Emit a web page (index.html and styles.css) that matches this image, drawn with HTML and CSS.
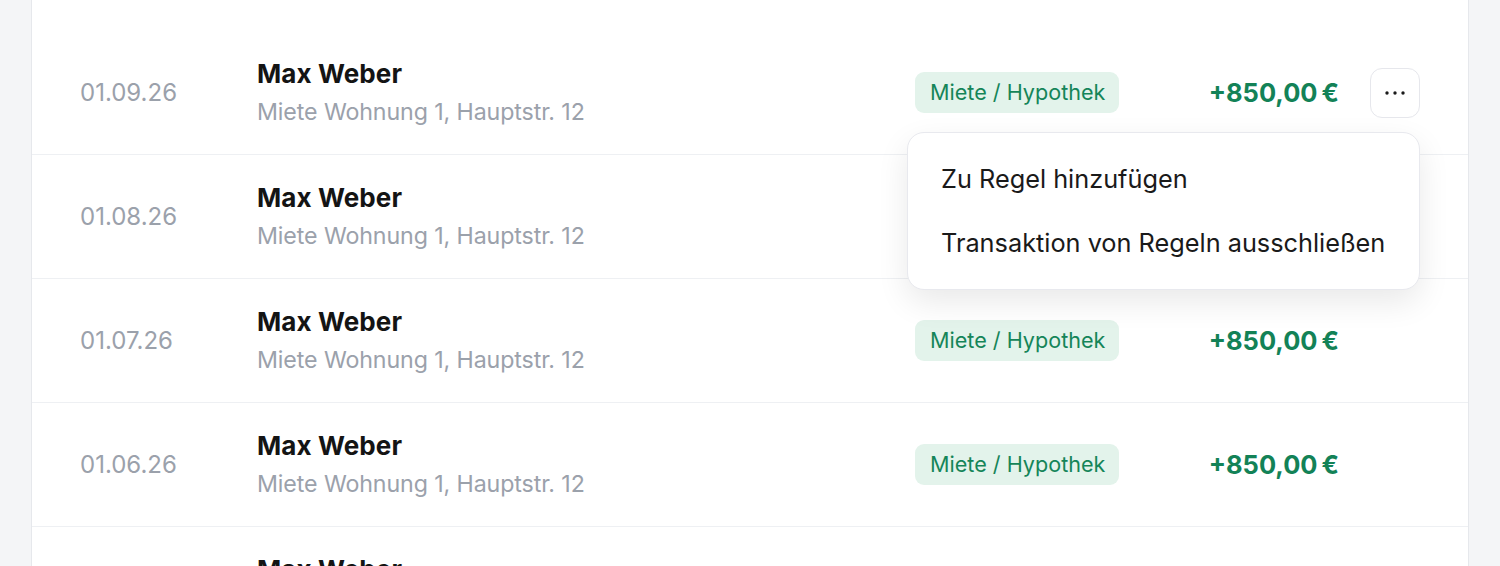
FILE: index.html
```html
<!DOCTYPE html>
<html lang="de">
<head>
<meta charset="utf-8">
<title>Transaktionen</title>
<link rel="stylesheet" href="styles.css">
</head>
<body>
<div class="page">
  <div class="card">
    <div class="row">
      <div class="date">01.09.26</div>
      <div class="main">
        <div class="name">Max Weber</div>
        <div class="sub">Miete Wohnung 1, Hauptstr. 12</div>
      </div>
      <div class="cat"><span class="badge">Miete / Hypothek</span></div>
      <div class="amount">+850,00&#8201;€</div>
      <div class="action">
        <button class="kebab" aria-label="Mehr">
          <svg width="24" height="6" viewBox="0 0 24 6"><circle cx="4" cy="3" r="1.7"/><circle cx="12" cy="3" r="1.7"/><circle cx="20" cy="3" r="1.7"/></svg>
        </button>
        <div class="menu">
          <div class="menu-item">Zu Regel hinzufügen</div>
          <div class="menu-item">Transaktion von Regeln ausschließen</div>
        </div>
      </div>
    </div>
    <div class="row">
      <div class="date">01.08.26</div>
      <div class="main">
        <div class="name">Max Weber</div>
        <div class="sub">Miete Wohnung 1, Hauptstr. 12</div>
      </div>
      <div class="cat"><span class="badge">Miete / Hypothek</span></div>
      <div class="amount">+850,00&#8201;€</div>
      <div class="action"></div>
    </div>
    <div class="row">
      <div class="date">01.07.26</div>
      <div class="main">
        <div class="name">Max Weber</div>
        <div class="sub">Miete Wohnung 1, Hauptstr. 12</div>
      </div>
      <div class="cat"><span class="badge">Miete / Hypothek</span></div>
      <div class="amount">+850,00&#8201;€</div>
      <div class="action"></div>
    </div>
    <div class="row">
      <div class="date">01.06.26</div>
      <div class="main">
        <div class="name">Max Weber</div>
        <div class="sub">Miete Wohnung 1, Hauptstr. 12</div>
      </div>
      <div class="cat"><span class="badge">Miete / Hypothek</span></div>
      <div class="amount">+850,00&#8201;€</div>
      <div class="action"></div>
    </div>
    <div class="row">
      <div class="date">01.05.26</div>
      <div class="main">
        <div class="name">Max Weber</div>
        <div class="sub">Miete Wohnung 1, Hauptstr. 12</div>
      </div>
      <div class="cat"><span class="badge">Miete / Hypothek</span></div>
      <div class="amount">+850,00&#8201;€</div>
      <div class="action"></div>
    </div>
  </div>
</div>
</body>
</html>
```
FILE: styles.css
```css
* { box-sizing: border-box; }
html, body {
  margin: 0;
  padding: 0;
  background: #f4f5f7;
  font-family: Inter, "Noto Sans", sans-serif;
  overflow: hidden;
}
.page {
  padding: 0 31px 0 31px;
  height: 566px;
}
.card {
  background: #fff;
  border-left: 1px solid #e6e8ec;
  border-right: 1px solid #e6e8ec;
  padding-top: 31px;
}
.row {
  display: flex;
  align-items: center;
  height: 124px;
  padding: 0 48px;
  border-bottom: 1px solid #eef0f3;
}
.date {
  width: 177px;
  flex: none;
  font-size: 24px;
  color: #9ba1ab;
}
.main {
  flex: 1;
  display: flex;
  flex-direction: column;
  gap: 4px;
}
.name {
  font-size: 26px;
  line-height: 34px;
  font-weight: 700;
  color: #141414;
  letter-spacing: 0.1px;
}
.sub {
  font-size: 23.2px;
  line-height: 34px;
  color: #9ba1ab;
  letter-spacing: -0.1px;
}
.cat {
  width: 244px;
  flex: none;
}
.badge {
  display: inline-block;
  background: #e3f3eb;
  color: #158559;
  font-size: 21.6px;
  line-height: 41px;
  padding: 0 14px 0 15px;
  border-radius: 9px;
}
.amount {
  width: 180px;
  flex: none;
  text-align: right;
  font-size: 25.5px;
  font-weight: 700;
  color: #138257;
}
.action {
  width: 50px;
  margin-left: 31px;
  flex: none;
  position: relative;
  height: 50px;
}
.kebab {
  width: 50px;
  height: 50px;
  border: 1.5px solid #e6e7ec;
  border-radius: 12px;
  background: #fff;
  display: flex;
  align-items: center;
  justify-content: center;
  padding: 0;
}
.kebab svg { fill: #1a1a1a; }
.menu {
  position: absolute;
  right: 0;
  top: 64px;
  width: 513px;
  background: #fff;
  border: 1.5px solid #e8e9ee;
  border-radius: 17px;
  padding: 14px 0;
  box-shadow: 0 12px 32px rgba(0, 0, 0, 0.09);
  z-index: 5;
}
.menu-item {
  height: 64px;
  line-height: 64px;
  padding-left: 33px;
  font-size: 25.3px;
  color: #1a1a1a;
  white-space: nowrap;
}
```
